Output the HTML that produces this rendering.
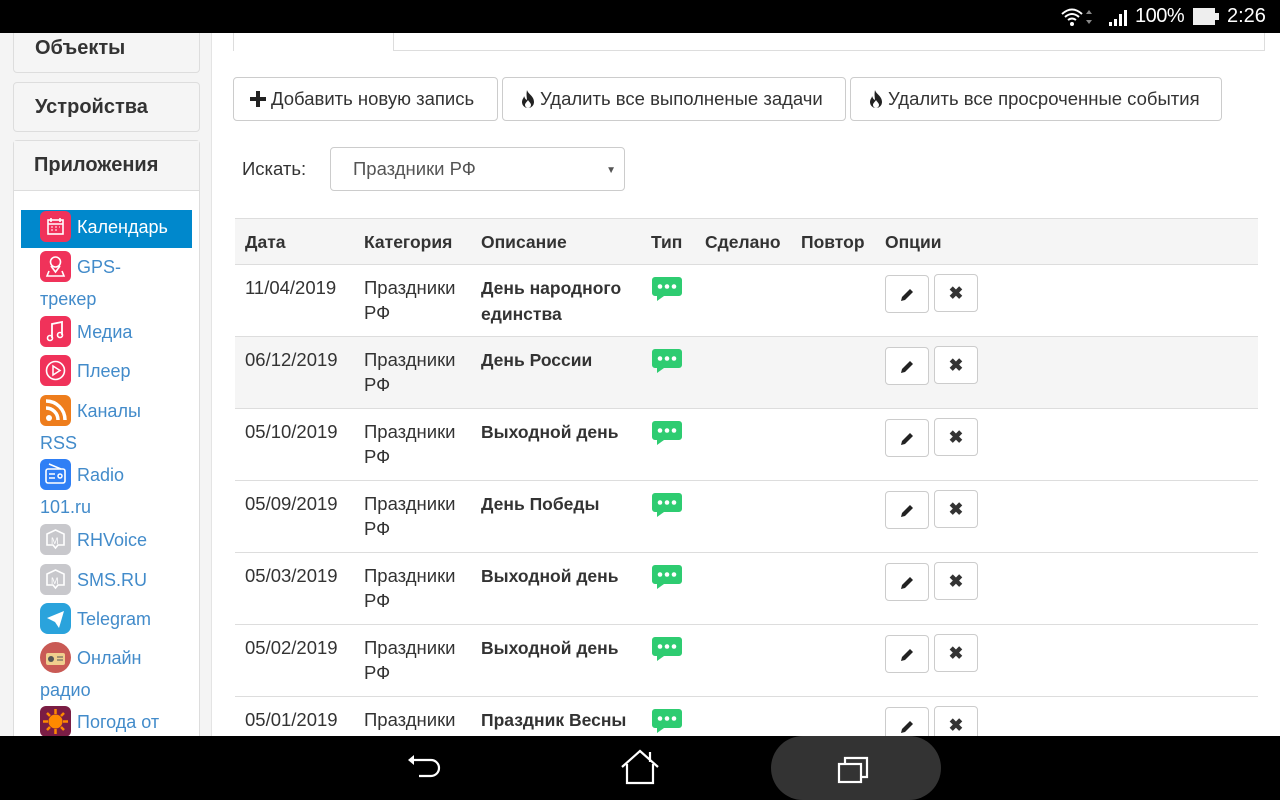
<!DOCTYPE html>
<html><head><meta charset="utf-8"><style>
*{box-sizing:border-box;margin:0;padding:0}
body{width:1280px;height:800px;overflow:hidden;position:relative;background:#fff;font-family:"Liberation Sans",sans-serif;color:#333}
.abs{position:absolute}
#top{left:0;top:0;width:1280px;height:33px;background:#000;color:#fff;z-index:5}
#bot{left:0;top:736px;width:1280px;height:64px;background:#000;z-index:5}
#side{left:0;top:33px;width:212px;height:703px;background:#f4f4f4;border-right:1px solid #e4e4e4}
.panel{position:absolute;left:13px;width:187px;background:#f5f5f5;border:1px solid #ddd;border-radius:4px;font-weight:bold;font-size:20px;color:#333;padding-left:21px}
.item{position:absolute;left:40px;font-size:18px;color:#428bca;line-height:30px;width:150px}
.ic{display:inline-block;width:31px;height:31px;border-radius:6px;vertical-align:middle;margin-right:6px;position:relative;top:-2px}
.btn{position:absolute;top:77px;height:44px;border:1px solid #ccc;border-radius:4px;font-size:18.5px;line-height:42px;padding-left:15px;color:#333;background:#fff;white-space:nowrap}
.btn svg{vertical-align:-3px;margin-right:4px}
th,td{text-align:left;vertical-align:top}
.tbl{position:absolute;left:235px;top:218px;width:1023px;border-collapse:collapse;font-size:18.5px}
.tbl th{height:46px;background:#f5f5f5;padding:13px 10px 0;font-weight:bold;border-top:1px solid #ddd;font-size:17.5px}
.tbl td{height:72px;padding:10px 10px 0;border-top:1px solid #ddd;line-height:25px}
.tbl td b{font-size:17.5px}
.tbl tr.g td{background:#f5f5f5}
.sb{display:inline-block;width:44px;height:38px;border:1px solid #ccc;border-radius:4px;margin-right:1px;text-align:center;line-height:36px;background:#fff;font-size:17px}
</style></head><body>
<div class="abs" id="top">
<svg class="abs" style="left:1060px;top:7px" width="40" height="20"><path d="M2 7 Q12 -2 22 7 M5 10 Q12 4 19 10 M8 13 Q12 10 16 13" stroke="#fff" stroke-width="2" fill="none"/><circle cx="12" cy="17" r="2" fill="#fff"/><path d="M29 3l3 4h-6z M29 17l3-4h-6z" fill="#888"/></svg>
<svg class="abs" style="left:1108px;top:9px" width="22" height="18"><rect x="1" y="13" width="3" height="4" fill="#fff"/><rect x="6" y="10" width="3" height="7" fill="#fff"/><rect x="11" y="5" width="3" height="12" fill="#fff"/><rect x="16" y="1" width="3" height="16" fill="#fff"/></svg>
<div class="abs" style="left:1135px;top:5px;font-size:20px;letter-spacing:-0.5px">100%</div>
<div class="abs" style="left:1193px;top:8px;width:22px;height:17px;background:#eee"></div><div class="abs" style="left:1215px;top:13px;width:4px;height:7px;background:#eee"></div>
<div class="abs" style="left:1227px;top:5px;font-size:20px">2:26</div>
</div>
<div class="abs" id="side">
<div class="panel" style="top:-6px;height:46px;line-height:41px">Объекты</div>
<div class="panel" style="top:49px;height:50px;line-height:48px">Устройства</div>
<div class="panel" style="top:107px;height:620px;line-height:48px;background:#fff;padding:0">
<div style="background:#f5f5f5;height:50px;border-bottom:1px solid #ddd;padding-left:20px">Приложения</div></div>
<div class="abs" style="left:21px;top:177px;width:171px;height:38px;background:#0088cc"></div>
</div>
<div class="item" style="top:212px;color:#fff"><span class="ic" style="background:#f0325a"><svg width="31" height="31"><rect x="8" y="9" width="15" height="14" stroke="#fff" stroke-width="1.6" fill="none"/><path d="M8 13h15M11 7v4M20 7v4" stroke="#fff" stroke-width="1.6"/><path d="M11 16h2M15 16h2M19 16h1M11 19h2M15 19h2" stroke="#fff"/></svg></span>Календарь</div>
<div class="item" style="top:252px"><span class="ic" style="background:#f0325a"><svg width="31" height="31"><circle cx="15.5" cy="11" r="5" stroke="#fff" stroke-width="1.6" fill="none"/><path d="M11 15l4.5 6 4.5-6M9 20l-2 5h17l-2-5" stroke="#fff" stroke-width="1.6" fill="none"/></svg></span>GPS-<br>трекер</div>
<div class="item" style="top:317px"><span class="ic" style="background:#f0325a"><svg width="31" height="31"><path d="M12 22V8l10-2v13" stroke="#fff" stroke-width="1.8" fill="none"/><circle cx="10" cy="22" r="2.5" stroke="#fff" stroke-width="1.6" fill="none"/><circle cx="20" cy="19" r="2.5" stroke="#fff" stroke-width="1.6" fill="none"/></svg></span>Медиа</div>
<div class="item" style="top:356px"><span class="ic" style="background:#f0325a"><svg width="31" height="31"><circle cx="15.5" cy="15.5" r="9" stroke="#fff" stroke-width="1.6" fill="none"/><path d="M13 11v9l7-4.5z" stroke="#fff" stroke-width="1.5" fill="none"/></svg></span>Плеер</div>
<div class="item" style="top:396px"><span class="ic" style="background:#ee7d1c"><svg width="31" height="31"><circle cx="9" cy="23" r="3" fill="#fff"/><path d="M6 13a12 12 0 0 1 12 12M6 6a19 19 0 0 1 19 19" stroke="#fff" stroke-width="3.5" fill="none"/></svg></span>Каналы<br>RSS</div>
<div class="item" style="top:460px"><span class="ic" style="background:#2f7ff5"><svg width="31" height="31"><rect x="6" y="10" width="19" height="14" rx="2" stroke="#fff" stroke-width="1.6" fill="none"/><path d="M9 5l12 5M9 15h6M9 19h6" stroke="#fff" stroke-width="1.5"/><circle cx="20" cy="17" r="2" stroke="#fff" stroke-width="1.5" fill="none"/></svg></span>Radio<br>101.ru</div>
<div class="item" style="top:525px"><span class="ic" style="background:#c8c8cc"><svg width="31" height="31"><path d="M7 10l8.5-4 8.5 4v11h-6l-2.5 3-2.5-3H7z" stroke="#fff" stroke-width="1.6" fill="none"/><text x="11" y="20" font-size="9" fill="#fff" font-family="Liberation Sans">M</text></svg></span>RHVoice</div>
<div class="item" style="top:565px"><span class="ic" style="background:#c8c8cc"><svg width="31" height="31"><path d="M7 10l8.5-4 8.5 4v11h-6l-2.5 3-2.5-3H7z" stroke="#fff" stroke-width="1.6" fill="none"/><text x="11" y="20" font-size="9" fill="#fff" font-family="Liberation Sans">M</text></svg></span>SMS.RU</div>
<div class="item" style="top:604px"><span class="ic" style="background:#2aa3dc;border-radius:8px"><svg width="31" height="31"><path d="M7 15l17-7-5 17-4-6z" fill="#fff"/></svg></span>Telegram</div>
<div class="item" style="top:643px"><span class="ic" style="background:#c95a55;border-radius:50%"><svg width="31" height="31"><rect x="6" y="11" width="19" height="12" rx="2" fill="#f0cf8e"/><circle cx="11" cy="17" r="3" fill="#555"/><path d="M17 15h6M17 18h6" stroke="#555"/></svg></span>Онлайн<br>радио</div>
<div class="item" style="top:707px"><span class="ic" style="background:#7a1d44"><svg width="31" height="31"><circle cx="15.5" cy="15.5" r="7" fill="#ff8a00"/><path d="M15.5 3v5M15.5 23v5M3 15.5h5M23 15.5h5M7 7l3 3M21 21l3 3M7 24l3-3M21 10l3-3" stroke="#ff8a00" stroke-width="2.5"/></svg></span>Погода от</div>

<div class="abs" style="left:233px;top:33px;width:161px;height:18px;border:1px solid #ddd;border-top:none;border-bottom:none"></div>
<div class="abs" style="left:393px;top:50px;width:872px;height:1px;background:#ddd"></div>
<div class="abs" style="left:1264px;top:33px;width:1px;height:17px;background:#ddd"></div>

<div class="btn" style="left:233px;width:265px"><svg width="18" height="18"><path d="M9 1v16M1 9h16" stroke="#222" stroke-width="4"/></svg>Добавить новую запись</div>
<div class="btn" style="left:502px;width:344px;padding-left:17px"><svg width="16" height="19"><path d="M7 1c1 4 7 6 7 12a6 6 0 0 1-12 0c0-3 2-4 2-6 1 2 1 3 3 4 0-2-1-5 0-10zM8 11c-1 2-3 3-3 5a3 3 0 0 0 6 0c0-2-2-3-3-5z" fill="#222" fill-rule="evenodd"/></svg>Удалить все выполненые задачи</div>
<div class="btn" style="left:850px;width:372px;padding-left:17px"><svg width="16" height="19"><path d="M7 1c1 4 7 6 7 12a6 6 0 0 1-12 0c0-3 2-4 2-6 1 2 1 3 3 4 0-2-1-5 0-10zM8 11c-1 2-3 3-3 5a3 3 0 0 0 6 0c0-2-2-3-3-5z" fill="#222" fill-rule="evenodd"/></svg>Удалить все просроченные события</div>
<div class="abs" style="left:242px;top:158px;font-size:18.5px">Искать:</div>
<div class="abs" style="left:330px;top:147px;width:295px;height:44px;border:1px solid #ccc;border-radius:4px;font-size:18.5px;line-height:42px;padding-left:22px;color:#555">Праздники РФ<span style="position:absolute;right:8px;top:2px;font-size:10px">▼</span></div>

<table class="tbl">
<tr><th style="width:119px">Дата</th><th style="width:117px">Категория</th><th style="width:170px">Описание</th><th style="width:54px">Тип</th><th style="width:96px">Сделано</th><th style="width:84px">Повтор</th><th>Опции</th></tr>
<tr><td>11/04/2019</td><td>Праздники<br>РФ</td><td><b>День народного<br>единства</b></td><td>§</td><td></td><td></td><td>$</td></tr>
<tr class="g"><td>06/12/2019</td><td>Праздники<br>РФ</td><td><b>День России</b></td><td>§</td><td></td><td></td><td>$</td></tr>
<tr><td>05/10/2019</td><td>Праздники<br>РФ</td><td><b>Выходной день</b></td><td>§</td><td></td><td></td><td>$</td></tr>
<tr><td>05/09/2019</td><td>Праздники<br>РФ</td><td><b>День Победы</b></td><td>§</td><td></td><td></td><td>$</td></tr>
<tr><td>05/03/2019</td><td>Праздники<br>РФ</td><td><b>Выходной день</b></td><td>§</td><td></td><td></td><td>$</td></tr>
<tr><td>05/02/2019</td><td>Праздники<br>РФ</td><td><b>Выходной день</b></td><td>§</td><td></td><td></td><td>$</td></tr>
<tr><td>05/01/2019</td><td>Праздники<br>РФ</td><td><b>Праздник Весны</b></td><td>§</td><td></td><td></td><td>$</td></tr>
</table>
<script>
var b='<svg width="32" height="32" style="margin-top:1px"><path d="M4 3h24a3 3 0 0 1 3 3v13a3 3 0 0 1-3 3H13l-7 5v-5H4a3 3 0 0 1-3-3V6a3 3 0 0 1 3-3z" fill="#2ecc71"/><circle cx="9" cy="12.5" r="2.3" fill="#fff"/><circle cx="16" cy="12.5" r="2.3" fill="#fff"/><circle cx="23" cy="12.5" r="2.3" fill="#fff"/></svg>';
var o='<span class="sb" style="margin-top:0"><svg width="16" height="16" style="vertical-align:middle"><path d="M2 14l1-4 8-8 3 3-8 8z" fill="#222"/></svg></span><span class="sb" style="margin-left:4px"><b>✖</b></span>';
document.querySelectorAll('.tbl td').forEach(function(t){if(t.textContent=='§'){t.innerHTML=b;t.style.paddingTop='8px'}if(t.textContent=='$'){t.innerHTML=o;t.style.paddingTop='9px'}});
</script>
<div class="abs" id="bot">
<svg class="abs" style="left:405px;top:16px" width="40" height="36"><path d="M8 8h18a8 8 0 0 1 0 16H14" stroke="#fff" stroke-width="2.2" fill="none"/><path d="M3 8l6-5v10z" fill="#fff"/></svg>
<svg class="abs" style="left:620px;top:12px" width="42" height="40"><path d="M2 19L20 3l18 16M7 16v19h26V16M30 4v10" stroke="#fff" stroke-width="2.2" fill="none"/></svg>
<div class="abs" style="left:771px;top:0;width:170px;height:64px;border-radius:32px;background:#333"></div>
<svg class="abs" style="left:836px;top:16px" width="42" height="36"><rect x="3" y="12" width="22" height="18" stroke="#fff" stroke-width="2.2" fill="none"/><path d="M9 12V6h22v19h-6" stroke="#fff" stroke-width="2.2" fill="none"/></svg>
</div>
</body></html>
